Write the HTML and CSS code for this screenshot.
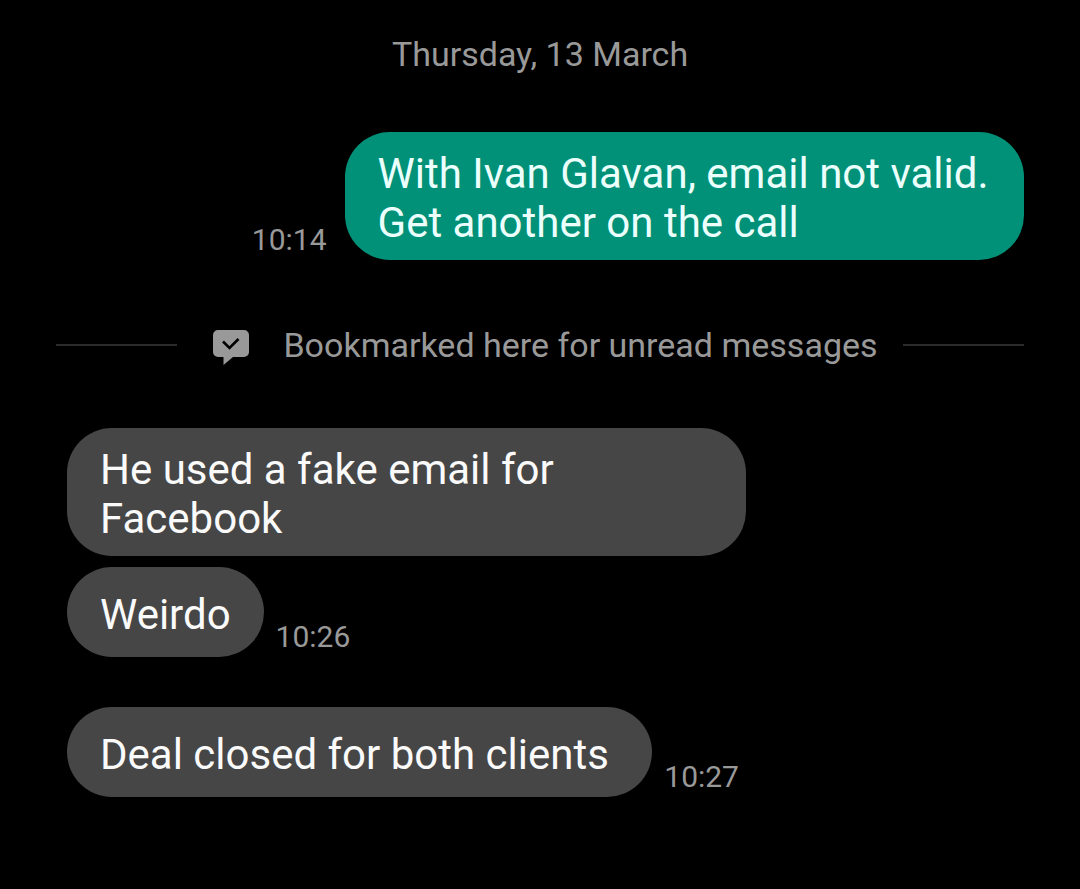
FILE: index.html
```html
<!DOCTYPE html>
<html lang="en">
<head>
<meta charset="UTF-8">
<meta name="viewport" content="width=device-width, initial-scale=1.0">
<title>Messages</title>
<link rel="stylesheet" href="styles.css">
</head>
<body>
<main class="chat">
    <div class="date">Thursday, 13 March</div>

    <!-- Sent -->
    <div class="row sent">
        <time class="time">10:14</time>
        <p class="bubble">With Ivan Glavan, email not valid. Get another on the call</p>
    </div>

    <!-- Unread divider -->
    <div class="bookmark">
        <svg class="bookmark-icon" width="36" height="42" viewBox="0 0 36 42" aria-hidden="true">
            <path fill="#999" d="M5 6h26a5 5 0 0 1 5 5v17a5 5 0 0 1-5 5H20l-9.500 8V33H5a5 5 0 0 1-5-5V11a5 5 0 0 1 5-5z"/>
            <path fill="none" stroke="#000" stroke-width="2.600" d="M10 17.500l6.500 6.500 9-9"/>
        </svg>
        <span>Bookmarked here for unread messages</span>
    </div>

    <!-- Received -->
    <div class="row">
        <p class="bubble">He used a fake email for Facebook</p>
    </div>
    <div class="row">
        <p class="bubble">Weirdo</p>
        <time class="time">10:26</time>
    </div>
    <div class="row new-group">
        <p class="bubble">Deal closed for both clients&nbsp;</p>
        <time class="time">10:27</time>
    </div>
</main>
</body>
</html>
```
FILE: styles.css
```css
body {
    margin: 0;
    background-color: #000;
    color: #fafafa;
    font-family: Roboto, sans-serif;
}
.chat {
    padding: 34px 56px 80px 67px;
}
.date {
    margin: 0 11px 57px 0;
    color: #999;
    font-size: 34px;
    line-height: 41px;
    text-align: center;
}
.row {
    display: flex;
    align-items: flex-end;
    gap: 12px;
    margin-bottom: 11px;
}
.bubble {
    display: flex;
    align-items: center;
    box-sizing: border-box;
    max-width: 71%;
    min-height: 90px;
    margin: 0;
    padding: 17px 33px 13px;
    border-radius: 45px;
    background-color: #464646;
    font-size: 42px;
    line-height: 49px;
}
.time {
    color: #999;
    font-size: 30px;
    line-height: 40px;
}
.sent {
    justify-content: flex-end;
    gap: 18px;
}
.sent .bubble {
    background-color: #009178;
    color: #ebfffc;
}
.bookmark {
    display: flex;
    align-items: center;
    margin: 62px 0 60px -11px;
    color: #999;
    font-size: 34px;
    line-height: 46px;
}
.bookmark::before,
.bookmark::after {
    content: "";
    flex: 1;
    height: 2px;
    background-color: #2b2b2b;
}
.bookmark::before {
    margin-right: 36px;
}
.bookmark::after {
    margin-left: 25px;
}
.bookmark-icon {
    margin-right: 34px;
}
.new-group {
    margin-top: 50px;
}
```
